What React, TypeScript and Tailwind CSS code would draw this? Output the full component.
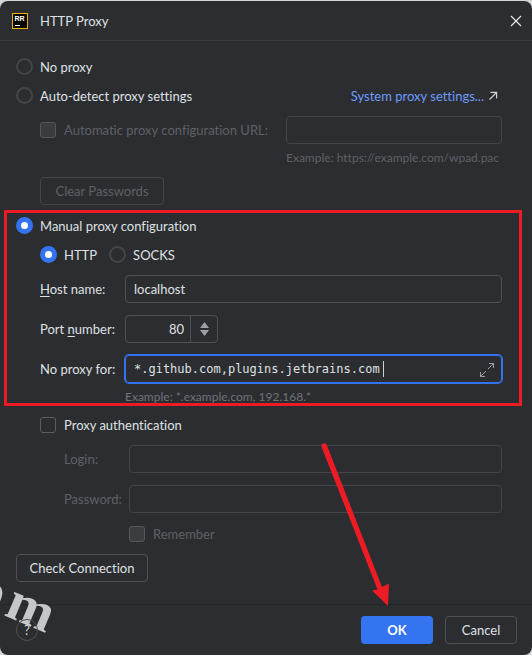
import { useState } from 'react';
import type { InputHTMLAttributes } from 'react';
import clsx from 'clsx';

const Radio = (props: InputHTMLAttributes<HTMLInputElement>) => (
  <input
    type="radio"
    className="m-0 size-[17px] shrink-0 appearance-none rounded-full border-2 border-[#43454a] outline-none checked:border-[5px] checked:border-[#3574f0] checked:bg-white"
    {...props}
  />
);

const Checkbox = (props: InputHTMLAttributes<HTMLInputElement>) => (
  <input
    type="checkbox"
    className="m-0 size-4 shrink-0 appearance-none rounded-[3px] border border-[#5a5d63] outline-none checked:bg-[#3574f0] disabled:border-[#55585e] disabled:bg-[#3a3c40]"
    {...props}
  />
);

const TextField = ({ className, ...props }: InputHTMLAttributes<HTMLInputElement>) => (
  <input
    className={clsx(
      'h-7 w-full min-w-0 rounded border bg-transparent px-2 outline-none disabled:border-[#43454a]',
      className
    )}
    {...props}
  />
);

const AppIcon = () => (
  <svg width="16" height="16" viewBox="0 0 16 16" aria-hidden="true">
    <rect width="16" height="16" fill="#f0b000" />
    <rect x="1" y="1" width="14" height="14" fill="#050505" />
    <text x="2.4" y="8" fill="#fff" fontSize="7" fontWeight="700" fontFamily="Liberation Sans, sans-serif">
      RR
    </text>
    <rect x="3" y="12" width="5" height="1" fill="#fff" />
  </svg>
);

const App = () => {
  const [mode, setMode] = useState('manual');
  const [protocol, setProtocol] = useState('http');
  const [host, setHost] = useState('localhost');
  const [port, setPort] = useState('80');
  const [exclusions, setExclusions] = useState('*.github.com,plugins.jetbrains.com ');

  return (
    <div className="min-h-screen bg-[#d3d7d5] pt-px font-['Lato','Noto_Sans',sans-serif] text-[13px] leading-[18px] text-[#dfe1e5] [font-variant-ligatures:none]">
      <div className="relative flex min-h-[calc(100vh-1px)] flex-col overflow-hidden rounded-lg bg-[#2b2d30]">
        <header className="flex h-10 items-center gap-3 border-b border-[#393b40] px-3">
          <AppIcon />
          <h1>HTTP Proxy</h1>
          <button aria-label="Close" className="ml-auto -mr-1 p-0.5">
            <svg width="12" height="12" viewBox="0 0 12 12" stroke="#e6e7e9" strokeWidth="1.2">
              <path d="M1 1l10 10M11 1L1 11" />
            </svg>
          </button>
        </header>

        <main className="flex-1 pt-[11px] pr-[30px] pb-[22px] pl-4">
          <label className="flex h-[29px] items-center gap-[7px]">
            <Radio name="mode" checked={mode === 'none'} onChange={() => setMode('none')} />
            No proxy
          </label>
          <div className="flex h-[29px] items-center justify-between">
            <label className="flex items-center gap-[7px]">
              <Radio name="mode" checked={mode === 'auto'} onChange={() => setMode('auto')} />
              Auto-detect proxy settings
            </label>
            <a href="#system" className="flex items-center gap-1 pr-1 text-[#6b9bfa]">
              System proxy settings...
              <svg width="10" height="10" viewBox="0 0 10 10" fill="none" stroke="#ced0d6" strokeWidth="1.2">
                <path d="M1.5 8.500l7-7M2.500 1.400h6.100v6.100" />
              </svg>
            </a>
          </div>

          <div className="mt-1.5 grid grid-cols-[246px_minmax(0,1fr)] items-center pl-6 text-[#5f6167]">
            <label className="flex items-center gap-2 whitespace-nowrap">
              <Checkbox disabled />
              Automatic proxy configuration URL:
            </label>
            <TextField disabled aria-label="Automatic proxy configuration URL" />
            <p className="col-start-2 mt-[5px] whitespace-nowrap text-[12px]">Example: https://example.com/wpad.pac</p>
          </div>
          <button disabled className="mt-2.5 ml-6 h-7 w-[124px] rounded border border-[#43454a] text-[#5f6167]">
            Clear Passwords
          </button>

          <section className="relative mt-1.5">
            <label className="flex h-[29px] items-center gap-[7px]">
              <Radio name="mode" checked={mode === 'manual'} onChange={() => setMode('manual')} />
              Manual proxy configuration
            </label>
            <div className="flex h-[29px] items-center gap-3 pl-6">
              <label className="flex items-center gap-[7px]">
                <Radio name="protocol" checked={protocol === 'http'} onChange={() => setProtocol('http')} />
                HTTP
              </label>
              <label className="flex items-center gap-[7px]">
                <Radio name="protocol" checked={protocol === 'socks'} onChange={() => setProtocol('socks')} />
                SOCKS
              </label>
            </div>

            <div className="mt-1.5 grid grid-cols-[85px_1fr] items-center gap-y-3 pl-6 whitespace-nowrap">
              <label htmlFor="host">
                <u className="underline-offset-2">H</u>ost name:
              </label>
              <TextField
                id="host"
                className="border-[#4e5157]"
                value={host}
                onChange={(e) => setHost(e.target.value)}
              />
              <label htmlFor="port">
                Port <u className="underline-offset-2">n</u>umber:
              </label>
              <div className="flex h-7 w-[93px] rounded border border-[#4e5157]">
                <input
                  id="port"
                  className="w-full min-w-0 bg-transparent pr-1.5 text-right outline-none"
                  value={port}
                  onChange={(e) => setPort(e.target.value)}
                />
                <div className="flex w-[27px] shrink-0 flex-col items-center justify-center gap-0.5 border-l border-[#4e5157]">
                  <button aria-label="Increase" onClick={() => setPort(String(Number(port) + 1))}>
                    <svg width="9" height="6" viewBox="0 0 9 6" className="block" fill="#9da0a8">
                      <path d="M4.5 0L9 6H0z" />
                    </svg>
                  </button>
                  <button aria-label="Decrease" onClick={() => setPort(String(Number(port) - 1))}>
                    <svg width="9" height="6" viewBox="0 0 9 6" className="block" fill="#9da0a8">
                      <path d="M4.5 6L9 0H0z" />
                    </svg>
                  </button>
                </div>
              </div>
              <label htmlFor="exclusions">No proxy for:</label>
              <div className="relative">
                <TextField
                  id="exclusions"
                  className="block border-[#3574f0] font-['DejaVu_Sans_Mono',monospace] text-[12px] ring-1 ring-[#3574f0]"
                  value={exclusions}
                  onChange={(e) => setExclusions(e.target.value)}
                />
                <span className="absolute top-1.5 left-[258px] h-4 w-px bg-[#ced0d6]" />
                <button aria-label="Expand" className="absolute top-[7px] right-[7px]">
                  <svg width="16" height="16" viewBox="0 0 16 16" className="block" fill="none" stroke="#9da0a8">
                    <path d="M9 7l5.5-5.5M10 1.5h4.5V6M7 9l-5.5 5.5M1.5 10v4.5H6" />
                  </svg>
                </button>
              </div>
            </div>
            <p className="mt-[5px] pl-[109px] text-[12px] text-[#6f737a]">Example: *.example.com, 192.168.*</p>
            <div className="pointer-events-none absolute -top-px -right-5 bottom-0 -left-3 border-[3px] border-[#ed1c24]" />
          </section>

          <label className="mt-1 flex h-[29px] items-center gap-2 pl-6">
            <Checkbox />
            Proxy authentication
          </label>
          <div className="mt-1.5 grid grid-cols-[65px_1fr] items-center gap-y-3 pl-12 text-[#5f6167]">
            <label htmlFor="login">Login:</label>
            <TextField id="login" disabled />
            <label htmlFor="password">Password:</label>
            <TextField id="password" type="password" disabled />
          </div>
          <label className="mt-1.5 flex h-[29px] items-center gap-2 pl-[113px] text-[#5f6167]">
            <Checkbox disabled />
            Remember
          </label>
          <button className="mt-1.5 block h-7 w-[132px] rounded border border-[#4e5157]">Check Connection</button>
        </main>

        <footer className="flex items-center border-t border-[#232427] px-4 py-[11px]">
          <button aria-label="Help" className="relative z-10 size-[22px] rounded-full border border-[#4e5157] text-[#ced0d6]">
            ?
          </button>
          <div className="relative ml-auto">
            <button className="block h-7 w-[72px] rounded bg-[#3574f0] font-bold text-white">OK</button>
            <svg
              width="70"
              height="168"
              viewBox="0 0 70 168"
              className="pointer-events-none absolute right-[42px] bottom-full mb-2"
              aria-hidden="true"
            >
              <path
                d="M1 8Q-.5 4.5 2 3.5Q4.800 2.800 6 5.500L61 147L68 143.500L67 166L51 150.500L56.500 149.500z"
                fill="#ed1c24"
              />
            </svg>
          </div>
          <button className="ml-3 -mr-px h-7 w-[72px] rounded border border-[#4e5157]">Cancel</button>
        </footer>

        <svg
          width="70"
          height="80"
          viewBox="0 0 70 80"
          className="pointer-events-none absolute bottom-0 left-0"
          fill="#c6c7c8"
          fontSize="56"
          fontFamily="Liberation Serif, serif"
          aria-hidden="true"
        >
          <text transform="translate(3 40) rotate(23)" x="-34">
            o<tspan x="0" fontWeight="700">m</tspan>
          </text>
        </svg>
      </div>
    </div>
  );
};

export default App;
